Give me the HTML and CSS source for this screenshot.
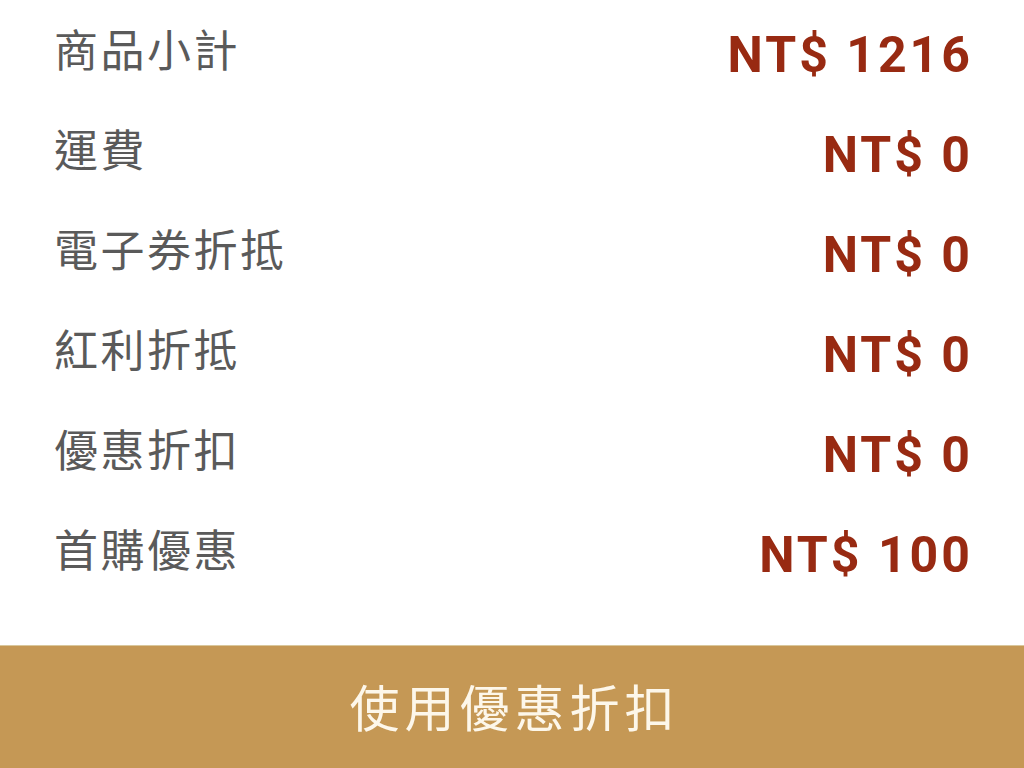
FILE: index.html
```html
<!DOCTYPE html>
<html lang="zh-Hant">
<head>
    <meta charset="UTF-8">
    <meta name="viewport" content="width=device-width, initial-scale=1.0">
    <title>結帳明細</title>
    <link rel="stylesheet" href="styles.css">
</head>
<body>
    <div class="summary">
        <div class="row">
            <span class="label">商品小計</span>
            <span class="amount">NT$ 1216</span>
        </div>
        <div class="row">
            <span class="label">運費</span>
            <span class="amount">NT$ 0</span>
        </div>
        <div class="row">
            <span class="label">電子券折抵</span>
            <span class="amount">NT$ 0</span>
        </div>
        <div class="row">
            <span class="label">紅利折抵</span>
            <span class="amount">NT$ 0</span>
        </div>
        <div class="row">
            <span class="label">優惠折扣</span>
            <span class="amount">NT$ 0</span>
        </div>
        <div class="row">
            <span class="label">首購優惠</span>
            <span class="amount">NT$ 100</span>
        </div>
    </div>
    <button type="button" class="discount-btn">使用優惠折扣</button>
</body>
</html>
```

FILE: styles.css
```css
body {
    margin: 0;
    background: #fff;
    font-family: "Noto Sans CJK TC", "Noto Sans", sans-serif;
}
.summary {
    padding: 2px 54px 43px 54px;
}
.row {
    display: flex;
    justify-content: space-between;
    align-items: center;
    height: 100px;
}
.label {
    font-size: 44px;
    color: #5a5a5a;
    letter-spacing: 2.5px;
    margin-bottom: 8px;
}
.amount {
    font-family: Roboto, "Liberation Sans", sans-serif;
    font-weight: bold;
    font-size: 50px;
    color: #982a12;
    letter-spacing: 3px;
    margin-top: 6px;
    margin-right: -3px;
}
.discount-btn {
    display: block;
    width: 100%;
    height: 123px;
    border: none;
    border-top: 1px solid #d9c79c;
    background: #c59855;
    color: #fdf7ea;
    font-family: "Noto Sans CJK TC", "Noto Sans", sans-serif;
    font-size: 50px;
    letter-spacing: 5px;
    padding: 0 0 4px 5px;
    cursor: pointer;
}
```
